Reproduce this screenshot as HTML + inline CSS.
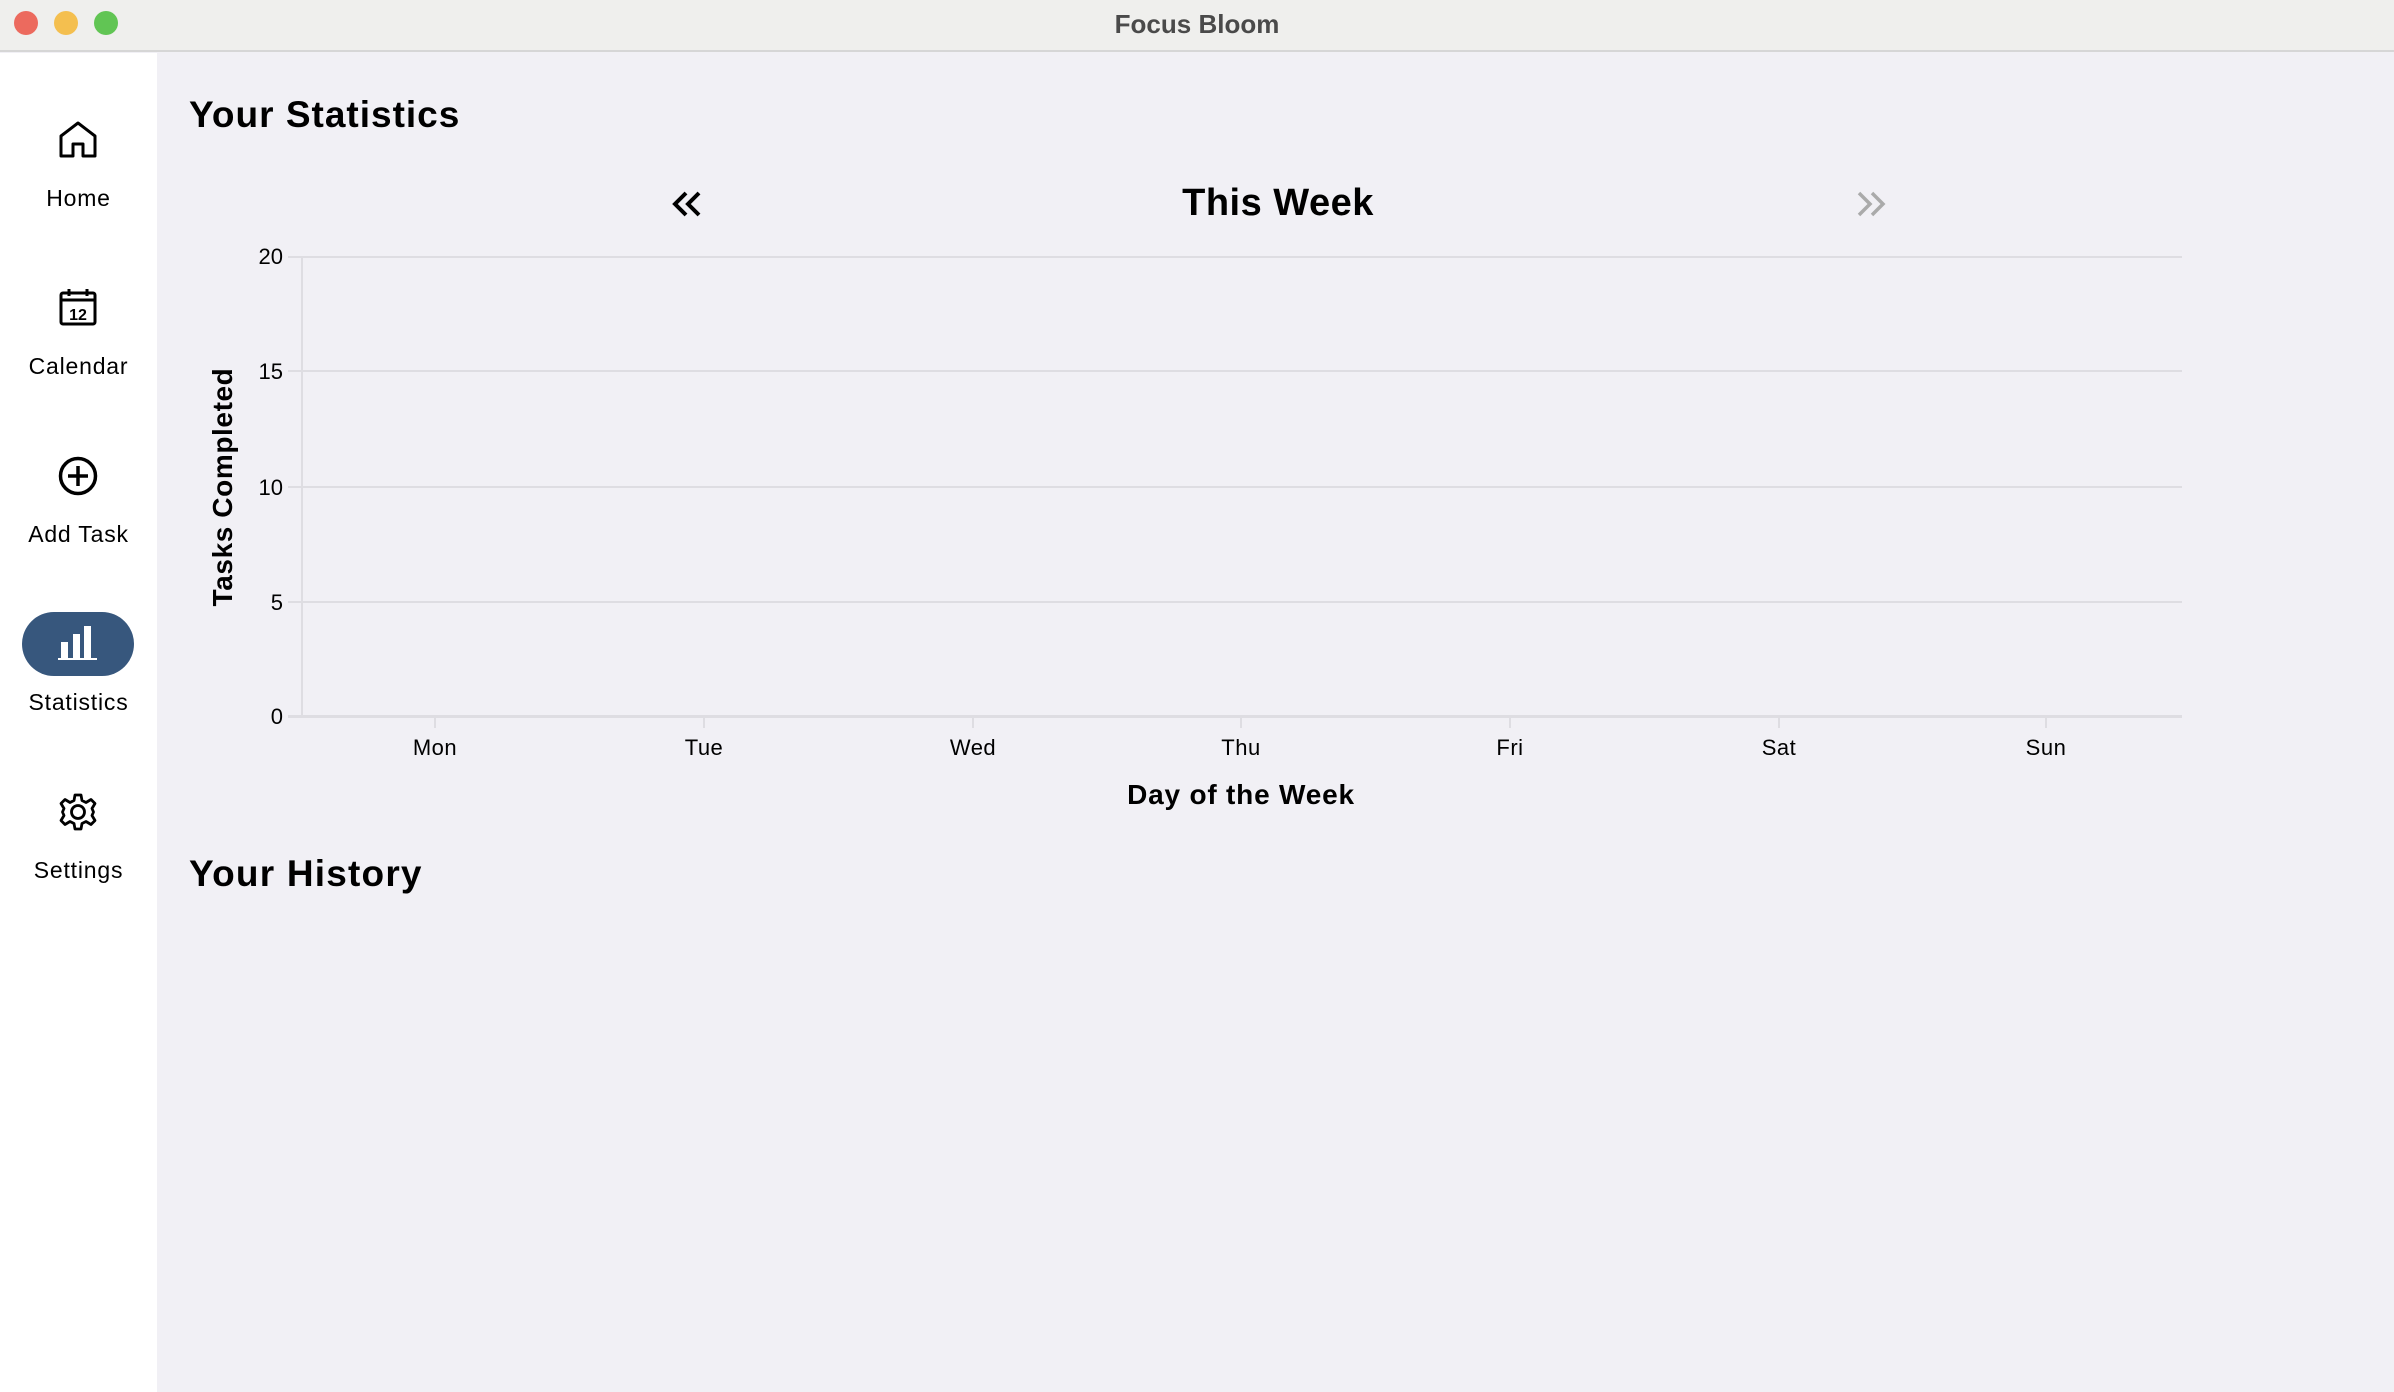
<!DOCTYPE html>
<html><head><meta charset="utf-8"><style>
*{margin:0;padding:0;box-sizing:border-box}
body{width:2394px;height:1392px;overflow:hidden;background:#f1f0f5;font-family:"Liberation Sans",sans-serif;position:relative;color:#000}
.a{position:absolute}
.tb{left:0;top:0;width:2394px;height:52px;background:#efefed;border-bottom:2px solid #d6d6d6}
.dot{width:24px;height:24px;border-radius:50%;top:11px}
.side{left:0;top:53px;width:157px;height:1339px;background:#fff}
.lbl{width:157px;left:0;text-align:center;font-size:23px;letter-spacing:0.8px}
.ic{left:58px;width:40px;height:40px}
.yl{width:60px;left:223px;text-align:right;font-size:22px}
.grid{left:288px;width:1894px;height:2px;background:#dedde2}
.xl{width:120px;text-align:center;font-size:22px;top:735px;letter-spacing:0.5px}
.tick{width:2px;height:12px;background:#dedde2;top:716px}
</style></head><body>
<div class="a tb"></div>
<div class="a dot" style="left:14px;background:#ec6a5e"></div>
<div class="a dot" style="left:54px;background:#f4bf4f"></div>
<div class="a dot" style="left:94px;background:#61c554"></div>
<div class="a" style="left:0;width:2394px;top:9px;text-align:center;font-size:26px;font-weight:bold;color:#4a4a4a">Focus Bloom</div>

<div class="a side"></div>
<svg class="a ic" style="top:120px" viewBox="0 0 40 40" fill="none" stroke="#000" stroke-width="3" stroke-linejoin="round"><path d="M3 36V16L20 3 37 16V36H25V24H15V36Z"/></svg>
<div class="a lbl" style="top:185px">Home</div>
<svg class="a ic" style="top:287px" viewBox="0 0 40 40" fill="none" stroke="#000" stroke-width="3"><rect x="3" y="6" width="34" height="31" rx="2"/><path d="M3 13H37M11 2V9M29 2V9"/><text x="20" y="33" text-anchor="middle" font-size="16" font-weight="bold" fill="#000" stroke="none" font-family="Liberation Sans">12</text></svg>
<div class="a lbl" style="top:353px">Calendar</div>
<svg class="a ic" style="top:456px" viewBox="0 0 40 40" fill="none" stroke="#000" stroke-width="3.5"><circle cx="20" cy="20" r="17.5"/><path d="M20 10V30M10 20H30"/></svg>
<div class="a lbl" style="top:521px">Add Task</div>
<div class="a" style="left:22px;top:612px;width:112px;height:64px;border-radius:32px;background:#37577d"></div>
<svg class="a" style="left:58px;top:624px" width="40" height="40" viewBox="0 0 40 40" fill="#fff"><rect x="3" y="18" width="7" height="16"/><rect x="15" y="10" width="7" height="24"/><rect x="26" y="2" width="7" height="32"/><rect x="0" y="34" width="39" height="2"/></svg>
<div class="a lbl" style="top:689px">Statistics</div>
<svg class="a ic" style="top:792px" viewBox="0 0 40 40" fill="none" stroke="#000" stroke-width="2.8" stroke-linejoin="round"><path d="M17 3H23L24 8.5 28 10.5 33 7.5 37 11.5 34 16.5 35.5 20 34 23.5 37 28.5 33 32.5 28 29.5 24 31.5 23 37H17L16 31.5 12 29.5 7 32.5 3 28.5 6 23.5 4.5 20 6 16.5 3 11.5 7 7.5 12 10.5 16 8.5Z"/><circle cx="20" cy="20" r="6.5"/></svg>
<div class="a lbl" style="top:857px">Settings</div>

<div class="a" style="left:189px;top:94px;font-size:37px;font-weight:bold;letter-spacing:1px">Your Statistics</div>
<div class="a" style="left:1078px;width:400px;text-align:center;top:182px;font-size:38px;font-weight:bold;letter-spacing:0.5px">This Week</div>
<svg class="a" style="left:671px;top:190px" width="32" height="28" viewBox="0 0 32 28" fill="none" stroke="#000" stroke-width="4"><path d="M15 3L4 14 15 25M28 3L17 14 28 25"/></svg>
<svg class="a" style="left:1855px;top:190px" width="32" height="28" viewBox="0 0 32 28" fill="none" stroke="#aaa" stroke-width="3.5"><path d="M4 3L15 14 4 25M17 3L28 14 17 25"/></svg>

<div class="a grid" style="top:256px"></div>
<div class="a grid" style="top:370px"></div>
<div class="a grid" style="top:486px"></div>
<div class="a grid" style="top:601px"></div>
<div class="a grid" style="top:715px;height:3px"></div>
<div class="a" style="left:301px;top:256px;width:2px;height:461px;background:#dedde2"></div>
<div class="a yl" style="top:244px">20</div>
<div class="a yl" style="top:359px">15</div>
<div class="a yl" style="top:475px">10</div>
<div class="a yl" style="top:590px">5</div>
<div class="a yl" style="top:704px">0</div>
<div class="a" style="left:223px;top:487px;transform:translate(-50%,-50%) rotate(-90deg);font-size:28px;font-weight:bold;white-space:nowrap;letter-spacing:0.6px">Tasks Completed</div>

<div class="a tick" style="left:434px"></div><div class="a xl" style="left:375px">Mon</div>
<div class="a tick" style="left:703px"></div><div class="a xl" style="left:644px">Tue</div>
<div class="a tick" style="left:972px"></div><div class="a xl" style="left:913px">Wed</div>
<div class="a tick" style="left:1240px"></div><div class="a xl" style="left:1181px">Thu</div>
<div class="a tick" style="left:1509px"></div><div class="a xl" style="left:1450px">Fri</div>
<div class="a tick" style="left:1778px"></div><div class="a xl" style="left:1719px">Sat</div>
<div class="a tick" style="left:2045px"></div><div class="a xl" style="left:1986px">Sun</div>
<div class="a" style="left:1041px;width:400px;text-align:center;top:779px;font-size:28px;font-weight:bold;letter-spacing:0.8px">Day of the Week</div>

<div class="a" style="left:189px;top:853px;font-size:37px;font-weight:bold;letter-spacing:1.2px">Your History</div>
</body></html>
